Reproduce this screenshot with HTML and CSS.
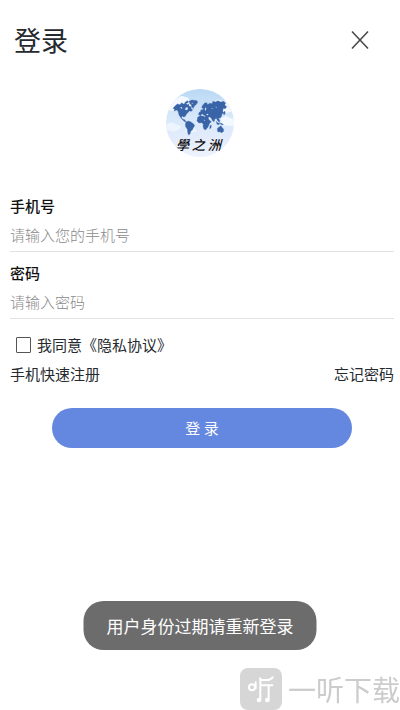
FILE: index.html
```
<!DOCTYPE html>
<html lang="zh-CN">
<head>
  <meta charset="UTF-8">
  <meta name="viewport" content="width=device-width, initial-scale=1.0">
  <title>登录</title>
  <link rel="stylesheet" href="styles.css">
</head>
<body>
  <header class="header">
    <h1>登录</h1>
    <button type="button" class="close" aria-label="关闭">
      <svg width="18" height="20" viewBox="0 0 18 20"><path d="M1 1.5 17 18.5M17 1.5 1 18.5" fill="none" stroke="#444" stroke-width="1.5"/></svg>
    </button>
  </header>

  <main class="container">
    <svg class="logo" viewBox="30 27 204 204" role="img" aria-label="學之洲">
      <defs>
        <linearGradient id="sky" x1="0" y1="0" x2="0" y2="1">
          <stop offset="0" stop-color="#b9d8f4"/>
          <stop offset="0.4" stop-color="#d6e8fa"/>
          <stop offset="0.75" stop-color="#e4ecfc"/>
          <stop offset="1" stop-color="#eef2fe"/>
        </linearGradient>
        <clipPath id="round"><circle cx="132" cy="129" r="102"/></clipPath>
      </defs>
      <g clip-path="url(#round)">
        <path fill="url(#sky)" d="M30 27h204v204H30z"/>
        <g fill="#f3f8fe">
          <path d="M40 58q12-9 25-3 10-12 23-4 12 0 12 15 12 4 10 17l-30 12-45-4z"/>
          <path d="M174 66q10-11 23-4 17-2 19 14 14 4 15 18l-30 8-27-10z"/>
          <path d="M195 118q12-15 24-5l15 5v20l-38-2z"/>
          <path d="M32 132q16-10 26 1 15-1 17 12l-20 10-25-6zM90 139q12-10 22 2l11 14-35 2z" opacity=".7"/>
        </g>
        <!-- continents -->
        <g fill="#3a64a8" stroke="#3a64a8" stroke-width="1" stroke-linejoin="round">
          <path d="M58 77l6-5 8 2 5-6 5 4 7-3 5 5 4-2 1 6 7 3-1 5 5 3-4 5-6-1-5 5-4 5-3 6-5 2-4-3-3 5 5 5 5 1 4 6 4 3-5-1-8-6-6-7-6-9-2-9-4-6-9 3 2-5-5-3z"/>
          <path d="M99 64l9-4 15 2 2 5-5 7-5 4-3 7-5-4-1-7-4-2zM86 68l8-6 4 4-5 4z"/>
          <path d="M91 126l6-3 8 3 8 6 3 5-4 6-3 7-5 4-2 8-4 3-3-8-1-9-5-8-1-8z"/>
          <path d="M127 103l3-6 5-3-1-4 6-1 2-4-5-2 2-6 7-8 6-1 3 6 6-4 7 1 3-7 7 2 8-4 8 4 9-2 6 5-3 6 6 5-4 6-6-1-2 8 3 6-5 3-2 8-4 4-5 1 4 6-1 6-5-5-4-7-4 1-3 9-4-3-5-9-6-3-3 4-7-2-2-6-6 1-4-4-3 4z"/>
          <path d="M125 112l7-5 8 1 7 3 8-1 4 9 4 4 3 2-6 6-2 6-4 7-5 5-5-1-3-9 1-7-5-4-8 1-6-6zM162 137l4-2-1 9-4 2z"/>
          <path d="M185 144l6-4 4-3 2 4 6 7-1 7-6 3-4-3-6 1-2-6zM181 124l5 6 5-2-2 6-6-1zM194 129l8 4-2 2-7-3zM202 99l4-6 2 6-4 6z"/>
        </g>
        <g fill="#dceafa">
          <path d="M73 82l4-1 2 4-4 1zM88 84l6-3 2 6-4 4-4-2zM107 68l4 1-3 3zM146 87l4-5 1 4-3 7zM151 103l5-2 1 4-4 1zM136 105l4-3 4 5-5 1zM161 111l3 7-2 1-4-7zM178 80l4 1-1 3zM166 86l3-2 1 3zM143 119l4 1-1 3z"/>
        </g>
        <text class="logo-text" y="211"><tspan x="59">學</tspan><tspan x="107">之</tspan><tspan x="155">洲</tspan></text>
      </g>
    </svg>

    <form class="login-form">
      <div class="input-group">
        <label for="phone">手机号</label>
        <input type="tel" id="phone" name="phone" placeholder="请输入您的手机号">
      </div>
      <div class="input-group">
        <label for="password">密码</label>
        <input type="password" id="password" name="password" placeholder="请输入密码">
      </div>
      <div class="agree">
        <input type="checkbox" id="agree" name="agree">
        <label for="agree">我同意《隐私协议》</label>
      </div>
      <div class="links">
        <a href="#register">手机快速注册</a>
        <a href="#forgot">忘记密码</a>
      </div>
      <button type="submit" class="btn">登 录</button>
    </form>
  </main>

  <div class="toast" role="status">用户身份过期请重新登录</div>

  <div class="watermark">
    <svg width="42" height="42" viewBox="0 0 126 126" aria-hidden="true">
      <rect width="126" height="126" rx="24" fill="#d6d6d6"/>
      <g fill="none" stroke="#fff" stroke-width="6" stroke-linecap="round">
        <circle cx="36" cy="58" r="9"/>
        <path d="M47 43v18M60 31q0 5 6 5h14q12 0 18-8M61 34v60M61 52h36M86 52v42"/>
      </g>
      <g fill="#fff"><circle cx="57" cy="96" r="7"/><circle cx="82" cy="96" r="7"/></g>
    </svg>
    <span>一听下载</span>
  </div>
</body>
</html>
```
FILE: styles.css
```
* {
  box-sizing: border-box;
}
body {
  margin: 0;
  font-family: "Noto Sans CJK SC", sans-serif;
  font-size: 15px;
  line-height: 22px;
  color: #26292e;
  background-color: #fff;
}
.header {
  display: flex;
  align-items: center;
  justify-content: space-between;
  padding: 20px 21px 0 14px;
}
.header h1 {
  margin: 0;
  font-size: 27px;
  font-weight: 400;
  line-height: 40px;
}
.close {
  display: flex;
  padding: 10px;
  border: none;
  background: none;
  cursor: pointer;
}
.container {
  padding: 29px 0 0;
}
.logo {
  display: block;
  width: 68px;
  height: 68px;
  margin: 0 auto 38px;
}
.logo-text {
  font-family: "Noto Sans CJK TC", sans-serif;
  font-size: 40px;
  font-style: italic;
  font-weight: 500;
  fill: #111;
}
.login-form {
  padding: 0 6px 0 10px;
}
.input-group {
  margin-bottom: 10px;
  border-bottom: 1px solid #e2e2e2;
}
.input-group label {
  display: block;
  font-weight: 500;
  color: #111;
}
.input-group input {
  display: block;
  width: 100%;
  height: 34px;
  padding: 0;
  border: none;
  outline: none;
  background: none;
  font: inherit;
  font-weight: 300;
}
.input-group input::placeholder {
  color: #8a8a8a;
}
.agree {
  display: flex;
  align-items: center;
  gap: 6px;
  margin-top: 15px;
  padding-left: 6px;
}
.agree input {
  appearance: none;
  width: 15px;
  height: 16px;
  margin: 0;
  border: 1px solid #555;
  border-radius: 1px;
}
.agree input:checked {
  background-color: #6487e0;
}
.links {
  display: flex;
  justify-content: space-between;
  margin-top: 7px;
}
.links a {
  color: inherit;
  text-decoration: none;
}
.btn {
  display: block;
  width: 78%;
  height: 40px;
  margin: 23px auto 0;
  border: none;
  border-radius: 20px;
  background-color: #6487e0;
  color: #fff;
  font: inherit;
  cursor: pointer;
}
.toast {
  position: fixed;
  bottom: 60px;
  left: 50%;
  transform: translateX(-50%);
  padding: 12px 23px;
  border-radius: 20px;
  background-color: #6c6c6c;
  color: #fff;
  font-size: 17px;
  line-height: 25px;
  white-space: nowrap;
}
.watermark {
  position: fixed;
  right: 0;
  bottom: 0;
  display: flex;
  align-items: center;
  gap: 6px;
  color: #ccc;
  font-size: 28px;
  line-height: 42px;
}
```
